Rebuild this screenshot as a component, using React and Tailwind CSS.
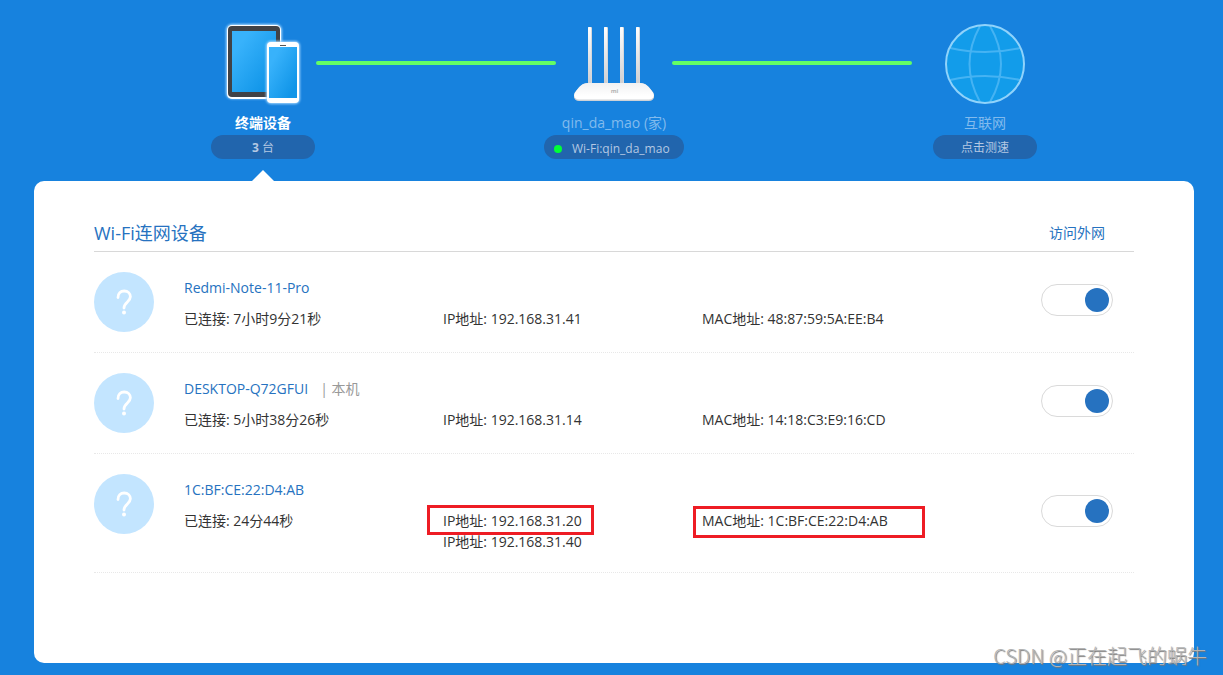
import React, { useState } from "react";

const devices = [
  {
    id: 1,
    name: "Redmi-Note-11-Pro",
    online: "7小时9分21秒",
    ips: ["192.168.31.41"],
    mac: "48:87:59:5A:EE:B4",
  },
  {
    id: 2,
    name: "DESKTOP-Q72GFUI",
    self: true,
    online: "5小时38分26秒",
    ips: ["192.168.31.14"],
    mac: "14:18:C3:E9:16:CD",
  },
  {
    id: 3,
    name: "1C:BF:CE:22:D4:AB",
    online: "24分44秒",
    ips: ["192.168.31.20", "192.168.31.40"],
    mac: "1C:BF:CE:22:D4:AB",
    marked: true,
  },
];

const DevicesIcon = () => (
  <svg width="80" height="80" viewBox="0 0 80 80" className="overflow-visible">
    <defs>
      <linearGradient id="screen" x1="0" y1="0" x2="1" y2="1">
        <stop offset="0.2" stopColor="#38b2fb" />
        <stop offset="0.85" stopColor="#1095e8" />
      </linearGradient>
      <filter id="glow" x="-20%" y="-20%" width="140%" height="140%">
        <feGaussianBlur stdDeviation="1.2" />
      </filter>
    </defs>
    <rect x="3" y="0" width="56" height="75" rx="6" fill="#a5d8ff" filter="url(#glow)" />
    <rect x="4" y="1" width="54" height="74" rx="5" fill="#fff" />
    <rect x="5" y="2" width="52" height="71" rx="4" fill="#414246" />
    <rect x="9" y="7" width="44" height="61" fill="url(#screen)" />
    <rect x="43" y="17" width="34" height="63" rx="5" fill="#a5d8ff" filter="url(#glow)" />
    <rect x="44" y="18" width="32" height="61" rx="4" fill="#fff" />
    <rect x="57" y="21" width="6" height="1" fill="#555" />
    <rect x="46" y="23" width="28" height="51" fill="url(#screen)" />
  </svg>
);

const RouterIcon = () => (
  <svg width="80" height="80" viewBox="0 0 80 80">
    <defs>
      <linearGradient id="antenna" x1="0" y1="0" x2="0" y2="1">
        <stop offset="0" stopColor="#fff" />
        <stop offset="1" stopColor="#cfcfd1" />
      </linearGradient>
      <linearGradient id="base" x1="0" y1="0" x2="0" y2="1">
        <stop offset="0" stopColor="#f1f1f2" />
        <stop offset="0.8" stopColor="#fff" />
      </linearGradient>
    </defs>
    {[14, 30, 46, 62].map((x) => (
      <g key={x}>
        <rect x={x} y="3" width="4" height="57" rx="1" fill="#d6d8dc" />
        <rect x={x} y="3" width="3" height="57" rx="1" fill="url(#antenna)" />
      </g>
    ))}
    <path
      d="M14 59H66C72 59 75 63 79 68.5C81.5 72 80 77 75 77H5C0 77 -1.5 72 1 68.5C5 63 8 59 14 59Z"
      fill="#cfd2d6"
    />
    <path
      d="M14 59H66C72 59 75 63 79 68.5C81 72 79 75.5 75 75.5H5C1 75.5 -1 72 1 68.5C5 63 8 59 14 59Z"
      fill="url(#base)"
    />
    <text x="40.5" y="69" textAnchor="middle" fontSize="6" fontWeight="700" fill="#b5b5b5">
      mi
    </text>
  </svg>
);

const GlobeIcon = () => (
  <svg width="80" height="80" viewBox="0 0 80 80" fill="none">
    <circle cx="40" cy="40" r="39" fill="#129cea" />
    <path
      d="M35 2Q14 40 35 78M45 2Q67 40 45 78M5 24Q40 32 75 24M5 56Q40 48 75 56"
      stroke="#45b3f3"
      strokeWidth="2"
    />
    <circle cx="40" cy="40" r="39" stroke="#90d3fb" strokeWidth="2" />
  </svg>
);

const UnknownDevice = () => (
  <svg width="60" height="60" viewBox="0 0 60 60" fill="none" className="shrink-0">
    <circle cx="30" cy="30" r="30" fill="#c3e5ff" />
    <path
      d="M24 25.5C24 21.5 26.5 19 30.2 19C34 19 36.4 21.5 36.4 24.8C36.4 29.5 30 30.5 30 36"
      stroke="#fff"
      strokeWidth="2.8"
      strokeLinecap="round"
    />
    <circle cx="30" cy="40.5" r="2" fill="#fff" />
  </svg>
);

const Link = () => <div className="mt-[37px] h-1 w-60 rounded-full bg-[#64fe64]" />;

const Topology = () => (
  <nav className="flex justify-center pt-6 pl-10 text-sm">
    <div className="flex w-[106px] flex-col items-center">
      <DevicesIcon />
      <a href="#devices" className="mt-[7px] leading-6 font-bold text-white">
        终端设备
      </a>
      <div className="flex h-6 w-[104px] items-center justify-center gap-[3px] rounded-full bg-[#2165ad] pt-[2px] text-xs text-[#b4c8e3]">
        <b>3</b>台
      </div>
      <svg width="24" height="11" viewBox="0 0 24 11" className="mt-[11px]">
        <path d="M12 0L23 11H1Z" fill="#fff" />
      </svg>
    </div>
    <Link />
    <div className="flex w-[116px] flex-col items-center">
      <RouterIcon />
      <a href="#router" className="mt-[7px] leading-6 whitespace-nowrap text-[#82bbed]">
        qin_da_mao (家)
      </a>
      <div className="flex h-6 w-[140px] items-center gap-[10px] rounded-full bg-[#2165ad] pt-1 pl-[10px] text-xs whitespace-nowrap text-[#b4c8e3]">
        <span className="h-2 w-2 shrink-0 rounded-full bg-[#00ff36]" />
        Wi-Fi:qin_da_mao
      </div>
    </div>
    <Link />
    <div className="flex w-[146px] flex-col items-center">
      <GlobeIcon />
      <a href="#internet" className="mt-[7px] leading-6 text-[#82bbed]">
        互联网
      </a>
      <button className="h-6 w-[104px] rounded-full bg-[#2165ad] pt-[2px] text-xs text-[#b4c8e3]">
        点击测速
      </button>
    </div>
  </nav>
);

const DeviceRow = ({ device }) => {
  const [allowed, setAllowed] = useState(true);

  return (
    <li className="flex items-center border-b border-dotted border-[#e8e8e8] py-5 pr-[21px]">
      <div className="flex flex-1 gap-[30px]">
        <UnknownDevice />
        <div className="flex-1 pt-[5px] leading-[21px]">
          <h3 className="text-[#2672c0]">
            {device.name}
            {device.self && <span className="ml-3 text-[#999]">| 本机</span>}
          </h3>
          <div className="mt-[10px] grid grid-cols-3 text-[#333]">
            <p>已连接: {device.online}</p>
            <div className="relative">
              {device.ips.map((ip) => (
                <p key={ip}>IP地址: {ip}</p>
              ))}
              {device.marked && (
                <span className="absolute -top-[5px] -left-4 h-[30px] w-[167px] border-3 border-[#ee1c24]" />
              )}
            </div>
            <div className="relative">
              <p>MAC地址: {device.mac}</p>
              {device.marked && (
                <span className="absolute -top-1 -left-[9px] h-8 w-[232px] border-3 border-[#ee1c24]" />
              )}
            </div>
          </div>
        </div>
      </div>
      <input
        type="checkbox"
        role="switch"
        aria-label={`${device.name} 访问外网`}
        checked={allowed}
        onChange={(e) => setAllowed(e.target.checked)}
        className="mb-1 ml-20 flex h-8 w-[72px] shrink-0 cursor-pointer appearance-none items-center rounded-full border border-[#dadada] bg-white p-[3px] before:h-6 before:w-6 before:rounded-full before:bg-[#bbb] checked:justify-end checked:before:bg-[#2672c0]"
      />
    </li>
  );
};

const App = () => {
  return (
    <div className="relative min-h-screen bg-[#1782de] pr-[29px] pb-3 pl-[34px] font-['Open_Sans','Noto_Sans_CJK_SC',sans-serif]">
      <Topology />

      <main id="devices" className="rounded-[10px] bg-white px-[60px] pt-10 pb-[90px] text-sm">
        <div className="flex items-center justify-between border-b border-[#d8d8d8] pr-[21px] pb-[6px] text-[#2672c0]">
          <h2 className="text-lg leading-6">Wi-Fi连网设备</h2>
          <span className="w-[72px] text-center">访问外网</span>
        </div>
        <ul>
          {devices.map((device) => (
            <DeviceRow key={device.id} device={device} />
          ))}
        </ul>
      </main>

      {/* watermark */}
      <p className="absolute right-4 bottom-1 font-['Noto_Sans_CJK_SC',sans-serif] text-xl leading-[30px] font-light text-[#b4b4b4] [text-shadow:1px_1px_1px_#777]">
        CSDN @正在起飞的蜗牛
      </p>
    </div>
  );
};

export default App;
